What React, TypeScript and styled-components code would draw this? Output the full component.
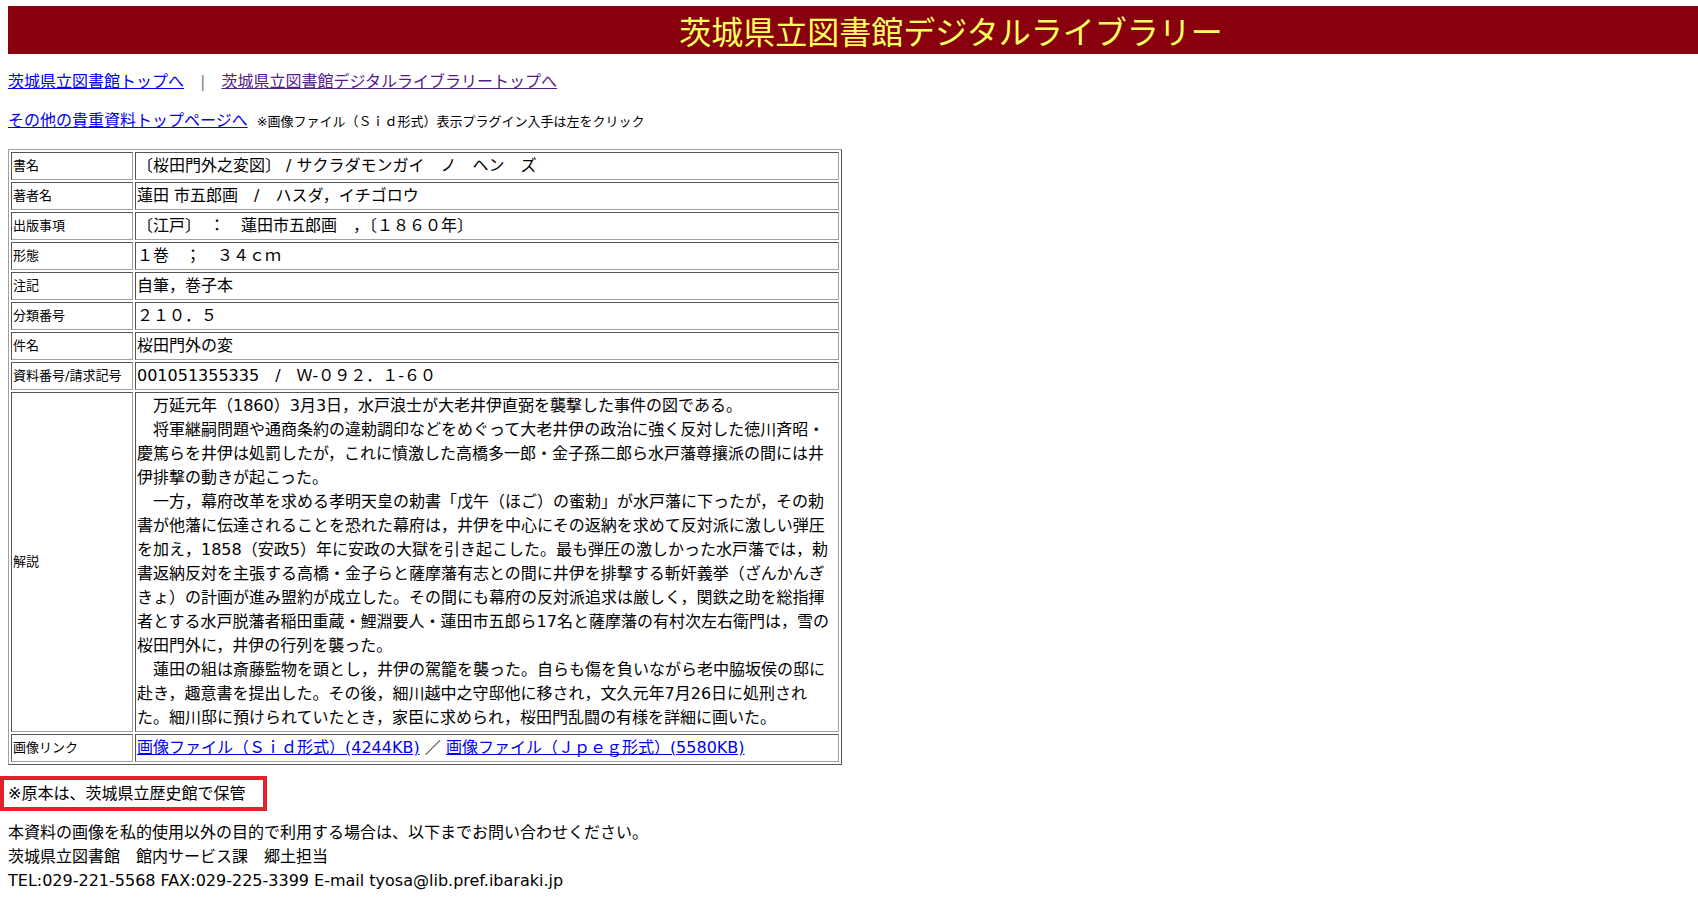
import styled, { createGlobalStyle } from "styled-components";

const GlobalStyle = createGlobalStyle`
  body {
    margin: 6px 0 8px 0;
    background: #ffffff;
    color: #000000;
    font-family: "DejaVu Sans", "Noto Sans CJK JP", sans-serif;
    font-size: 16px;
  }
`;

interface Row {
  label: string;
  value: string;
}

const rows: Row[] = [
  { label: "書名", value: "〔桜田門外之変図〕 / サクラダモンガイ　ノ　ヘン　ズ" },
  { label: "著者名", value: "蓮田 市五郎画　/　ハスダ，イチゴロウ" },
  { label: "出版事項", value: "〔江戸〕　：　蓮田市五郎画　，〔１８６０年〕" },
  { label: "形態", value: "１巻　；　３４ｃｍ" },
  { label: "注記", value: "自筆，巻子本" },
  { label: "分類番号", value: "２１０．５" },
  { label: "件名", value: "桜田門外の変" },
  { label: "資料番号/請求記号", value: "001051355335　/　Ｗ-０９２．１-６０" },
];

const commentary: string[] = [
  "　万延元年（1860）3月3日，水戸浪士が大老井伊直弼を襲撃した事件の図である。",
  "　将軍継嗣問題や通商条約の違勅調印などをめぐって大老井伊の政治に強く反対した徳川斉昭・",
  "慶篤らを井伊は処罰したが，これに憤激した高橋多一郎・金子孫二郎ら水戸藩尊攘派の間には井",
  "伊排撃の動きが起こった。",
  "　一方，幕府改革を求める孝明天皇の勅書「戊午（ほご）の蜜勅」が水戸藩に下ったが，その勅",
  "書が他藩に伝達されることを恐れた幕府は，井伊を中心にその返納を求めて反対派に激しい弾圧",
  "を加え，1858（安政5）年に安政の大獄を引き起こした。最も弾圧の激しかった水戸藩では，勅",
  "書返納反対を主張する高橋・金子らと薩摩藩有志との間に井伊を排撃する斬奸義挙（ざんかんぎ",
  "きょ）の計画が進み盟約が成立した。その間にも幕府の反対派追求は厳しく，関鉄之助を総指揮",
  "者とする水戸脱藩者稲田重蔵・鯉淵要人・蓮田市五郎ら17名と薩摩藩の有村次左右衛門は，雪の",
  "桜田門外に，井伊の行列を襲った。",
  "　蓮田の組は斎藤監物を頭とし，井伊の駕籠を襲った。自らも傷を負いながら老中脇坂侯の邸に",
  "赴き，趣意書を提出した。その後，細川越中之守邸他に移され，文久元年7月26日に処刑され",
  "た。細川邸に預けられていたとき，家臣に求められ，桜田門乱闘の有様を詳細に画いた。",
];

export default function App() {
  return (
    <>
      <GlobalStyle />
      <Banner>茨城県立図書館デジタルライブラリー</Banner>

      <Section>
        <NavLine $gap={16}>
          <Link href="#">茨城県立図書館トップへ</Link>
          <Divider>　|　</Divider>
          <Link href="#" $visited>
            茨城県立図書館デジタルライブラリートップへ
          </Link>
        </NavLine>

        <NavLine $gap={15}>
          <Link href="#">その他の貴重資料トップページへ</Link>
          <Note>※画像ファイル（Ｓｉｄ形式）表示プラグイン入手は左をクリック</Note>
        </NavLine>

        <DetailTable>
          <tbody>
            {rows.map((row) => (
              <tr key={row.label}>
                <LabelCell>{row.label}</LabelCell>
                <ValueCell>{row.value}</ValueCell>
              </tr>
            ))}
            <tr>
              <LabelCell>解説</LabelCell>
              <ValueCell>
                {commentary.map((line, i) => (
                  <span key={i}>
                    {line}
                    {i < commentary.length - 1 && <br />}
                  </span>
                ))}
              </ValueCell>
            </tr>
            <tr>
              <LabelCell>画像リンク</LabelCell>
              <ValueCell>
                <Link href="#">画像ファイル（Ｓｉｄ形式）(4244KB)</Link>
                {" ／ "}
                <Link href="#">画像ファイル（Ｊｐｅｇ形式）(5580KB)</Link>
              </ValueCell>
            </tr>
          </tbody>
        </DetailTable>
      </Section>

      <Notice>※原本は、茨城県立歴史館で保管</Notice>

      <Contact>
        <div>本資料の画像を私的使用以外の目的で利用する場合は、以下までお問い合わせください。</div>
        <div>茨城県立図書館　館内サービス課　郷土担当</div>
        <div>TEL:029-221-5568 FAX:029-225-3399 E-mail tyosa@lib.pref.ibaraki.jp</div>
      </Contact>
    </>
  );
}

const Banner = styled.div`
  margin-left: 8px;
  height: 48px;
  padding-left: 196px;
  background-color: #88000e;
  color: #ffff5e;
  font-family: "Noto Sans CJK JP", sans-serif;
  font-size: 32px;
  line-height: 48px;
  text-align: center;
  white-space: nowrap;
`;

const Section = styled.div`
  padding-left: 8px;
`;

const NavLine = styled.div<{ $gap: number }>`
  margin-top: ${(p) => p.$gap}px;
  line-height: 24px;
  white-space: nowrap;
`;

const Link = styled.a<{ $visited?: boolean }>`
  color: ${(p) => (p.$visited ? "#551a8b" : "#0000ee")};
  text-decoration: underline;
`;

const Divider = styled.span`
  color: #808080;
`;

const Note = styled.span`
  margin-left: 9px;
  font-size: 13px;
`;

const DetailTable = styled.table`
  margin-top: 15px;
  width: 834px;
  border-collapse: separate;
  border-spacing: 2px;
  border: 1px solid;
  border-color: #a0a0a0 #555555 #555555 #a0a0a0;
`;

const Cell = styled.td`
  padding: 1px;
  border: 1px solid;
  border-color: #555555 #a0a0a0 #a0a0a0 #555555;
  line-height: 24px;
`;

const LabelCell = styled(Cell)`
  width: 118px;
  font-size: 13px;
  vertical-align: middle;
  white-space: nowrap;
`;

const ValueCell = styled(Cell)`
  font-size: 16px;
  vertical-align: middle;
`;

const Notice = styled.div`
  box-sizing: border-box;
  margin-top: 11px;
  width: 267px;
  padding: 2px 4px 1px 4px;
  border: 4px solid #e3202b;
  line-height: 24px;
  white-space: nowrap;
`;

const Contact = styled.div`
  margin-top: 10px;
  padding-left: 8px;
  line-height: 24px;
`;
